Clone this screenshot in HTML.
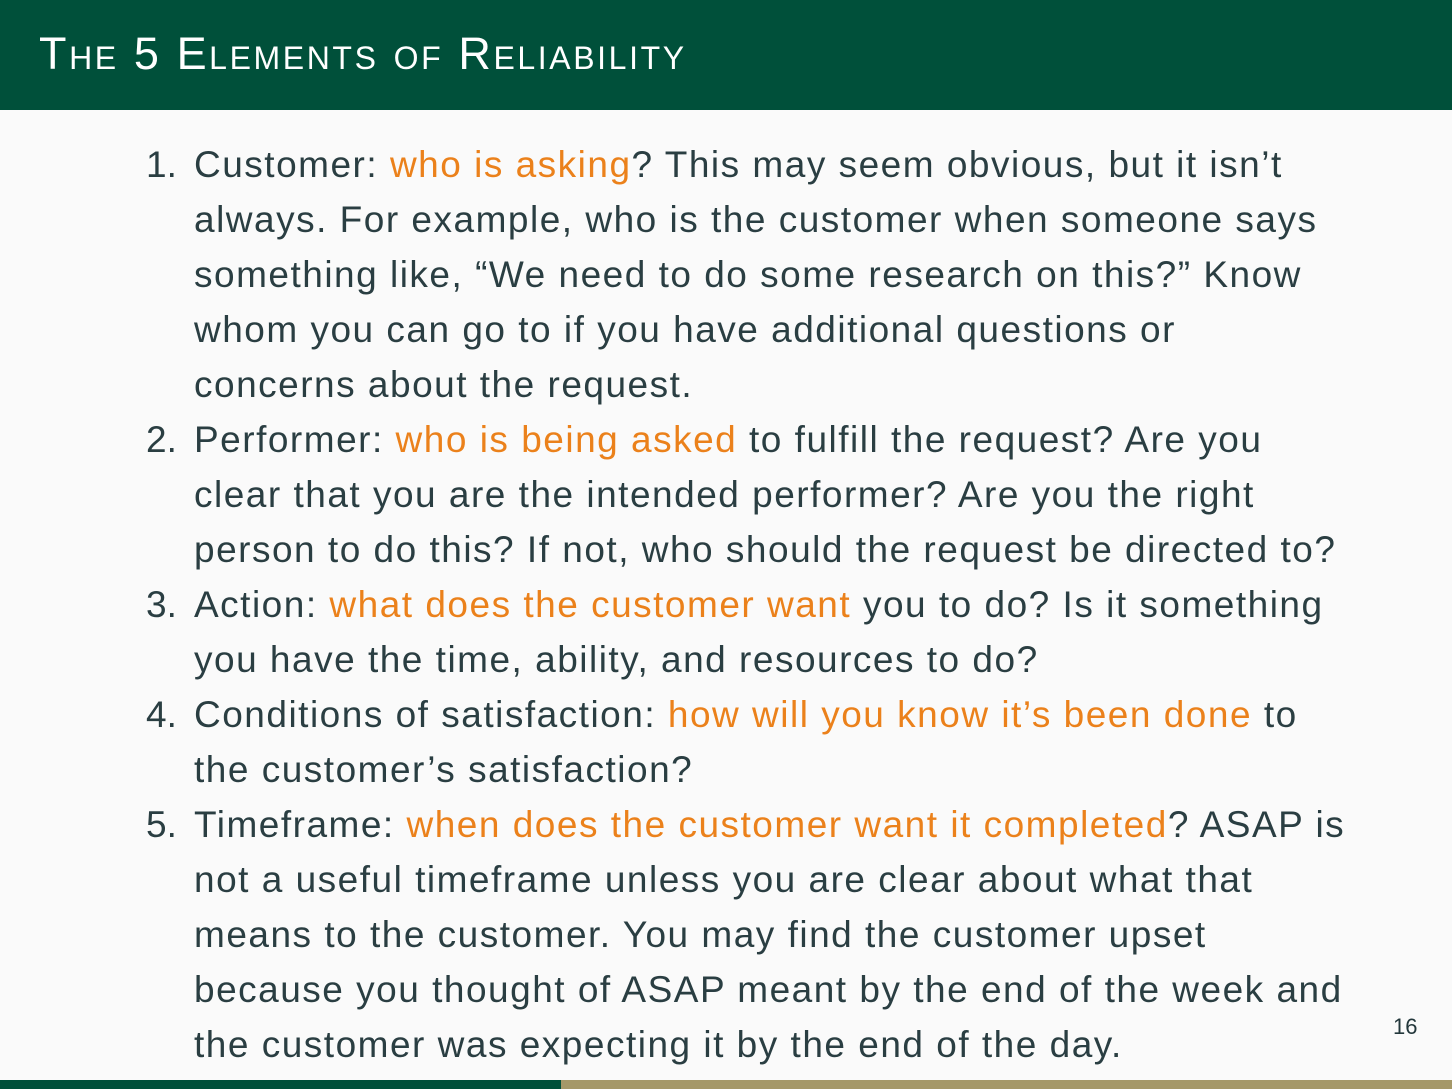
<!DOCTYPE html>
<html><head><meta charset="utf-8"><style>
html,body{margin:0;padding:0}
body{width:1452px;height:1089px;background:#fafafa;position:relative;overflow:hidden;font-family:"Liberation Sans",sans-serif;color:#2a3e42}
.hd{position:absolute;left:0;top:0;width:1452px;height:110px;background:#00503a}
.hd span{position:absolute;left:39px;top:29px;color:#fff;font-size:45px;font-variant:small-caps;letter-spacing:2.6px;line-height:50px}
.l{position:absolute;left:194px;font-size:37px;letter-spacing:1.5px;white-space:nowrap;line-height:40px}
.n{position:absolute;left:146px;font-size:37px;line-height:40px}
.o{color:#eb811b}
.pg{position:absolute;left:1393px;top:1014px;font-size:22px;color:#23373b}
.b1{position:absolute;left:0;top:1080px;width:561px;height:9px;background:#00503a}
.b2{position:absolute;left:561px;top:1080px;width:891px;height:9px;background:#a59868}
</style></head><body>
<div class="hd"><span>The 5 Elements of Reliability</span></div>
<div class="n" style="top:145px">1.</div>
<div class="l" style="top:145px">Customer: <span class="o">who is asking</span>? This may seem obvious, but it isn’t</div>
<div class="l" style="top:200px">always. For example, who is the customer when someone says</div>
<div class="l" style="top:255px">something like, “We need to do some research on this?” Know</div>
<div class="l" style="top:310px">whom you can go to if you have additional questions or</div>
<div class="l" style="top:365px">concerns about the request.</div>
<div class="n" style="top:420px">2.</div>
<div class="l" style="top:420px">Performer: <span class="o">who is being asked</span> to fulfill the request? Are you</div>
<div class="l" style="top:475px">clear that you are the intended performer? Are you the right</div>
<div class="l" style="top:530px">person to do this? If not, who should the request be directed to?</div>
<div class="n" style="top:585px">3.</div>
<div class="l" style="top:585px">Action: <span class="o">what does the customer want</span> you to do? Is it something</div>
<div class="l" style="top:640px">you have the time, ability, and resources to do?</div>
<div class="n" style="top:695px">4.</div>
<div class="l" style="top:695px">Conditions of satisfaction: <span class="o">how will you know it’s been done</span> to</div>
<div class="l" style="top:750px">the customer’s satisfaction?</div>
<div class="n" style="top:805px">5.</div>
<div class="l" style="top:805px">Timeframe: <span class="o">when does the customer want it completed</span>? ASAP is</div>
<div class="l" style="top:860px">not a useful timeframe unless you are clear about what that</div>
<div class="l" style="top:915px">means to the customer. You may find the customer upset</div>
<div class="l" style="top:970px">because you thought of ASAP meant by the end of the week and</div>
<div class="l" style="top:1025px">the customer was expecting it by the end of the day.</div>
<div class="pg">16</div>
<div class="b1"></div><div class="b2"></div>
</body></html>
